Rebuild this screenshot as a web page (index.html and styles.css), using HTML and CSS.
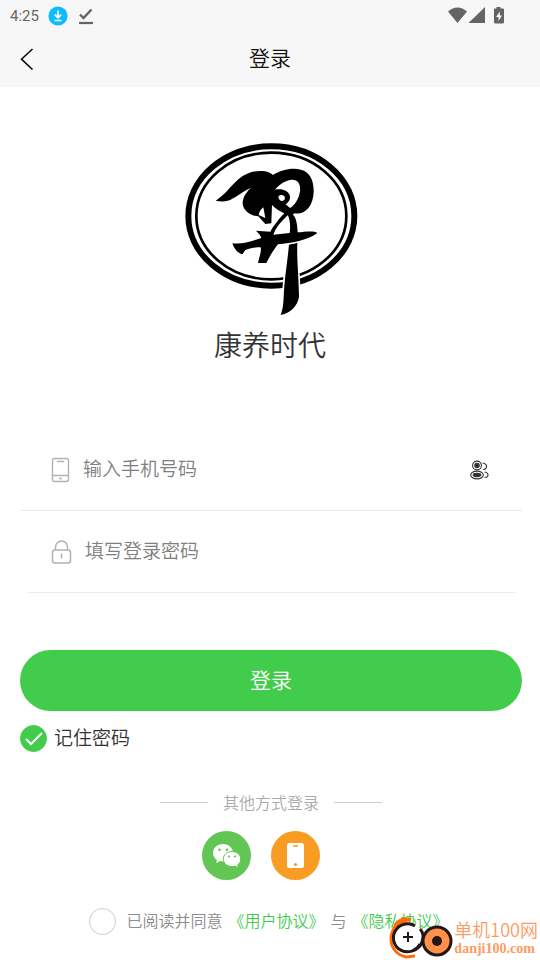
FILE: index.html
```html
<!DOCTYPE html>
<html lang="zh-CN">
<head>
  <meta charset="UTF-8">
  <meta name="viewport" content="width=device-width, initial-scale=1">
  <title>登录 - 康养时代</title>
  <link rel="stylesheet" href="styles.css">
</head>
<body>
  <header class="header">
    <div class="status-bar">
      <span class="time">4:25</span>
      <svg class="icon-download" width="20" height="20" viewBox="0 0 20 20">
        <circle cx="10" cy="10" r="9.6" fill="#0cbcff"/>
        <path d="M10 4.5v7M6.8 8.7l3.2 3.2 3.2-3.2M6.5 14.5h7" fill="none" stroke="#fff" stroke-width="1.7"/>
      </svg>
      <svg class="icon-done" width="16" height="18" viewBox="0 0 16 18">
        <path d="M2 7.500l3.500 3.500L13.500 2.500" fill="none" stroke="#646464" stroke-width="2.400"/>
        <path d="M1 16h14" stroke="#646464" stroke-width="2.200"/>
      </svg>
      <svg class="icon-signal" width="58" height="18" viewBox="0 0 58 18">
        <path d="M0 4.500Q9.500-3.500 19 4.500L9.500 16z" fill="#646464"/>
        <path d="M20.500 16L37 0v16z" fill="#646464"/>
        <path d="M48.500 0h4v1.500H55q1 0 1 1V15q0 1.500-1.500 1.500h-7Q46 16.500 46 15V2.500q0-1 1-1h1.500z" fill="#646464"/>
        <path d="M51.800 4.500L48 10h2.500v4L54 8.500h-2.200z" fill="#f7f7f7"/>
      </svg>
    </div>
    <div class="nav-bar">
      <button type="button" class="back-btn" aria-label="返回">
        <svg width="14" height="22" viewBox="0 0 14 22">
          <path d="M12.500 1L1.500 11.200 12.500 21.500" fill="none" stroke="#111" stroke-width="1.600"/>
        </svg>
      </button>
      <h1>登录</h1>
    </div>
  </header>

  <main class="container">
    <div class="brand">
      <svg class="logo" viewBox="0 0 570 570" role="img" aria-label="康养时代">
        <ellipse cx="289" cy="243" rx="249" ry="209" fill="none" stroke="#000" stroke-width="18"/>
        <ellipse cx="289" cy="243" rx="225" ry="190" fill="none" stroke="#000" stroke-width="8"/>
        <path d="M325 425L374 415 378 490 320 490z" fill="#fff"/>
        <!-- upper brush strokes -->
        <path fill-rule="evenodd" d="M122 197C150 180 166 154 190 133C216 110 246 106 270 109C283 111 290 117 294 120C318 105 350 97 378 104C405 111 417 137 416 170C415 211 391 241 358 235L350 242L331 236C313 229 301 220 291 210L289 265L271 267L250 244C226 243 205 226 203 207C202 188 214 171 228 158C200 170 178 192 158 197C144 201 132 199 122 197zM300 164C316 160 336 164 343 178C350 192 339 204 332 208L345 219C361 210 372 190 375 169C378 144 366 133 350 134C326 137 311 151 300 164zM310 187C312 198 324 202 329 193C332 185 325 179 318 180C313 181 310 183 310 187zM265 217C257 223 252 232 251 240L271 249z"/>
        <!-- lower brush strokes -->
        <path d="M331 232C318 245 298 268 286 290L243 287C253 297 257 302 259 309C230 318 202 329 172 325C178 342 188 354 202 358L211 345C229 338 244 337 257 337C260 350 252 367 249 384L274 384C284 363 297 343 309 328C350 324 396 317 427 294C418 286 390 290 368 292L366 270C364 254 359 241 349 235L338 239C345 253 347 272 344 294L295 299C302 277 324 253 343 237z"/>
        <path d="M342 328L367 323C365 374 371 420 372 485C369 510 349 533 317 540C327 514 325 489 328 453C332 407 339 365 342 328z"/>
        <path d="M340 328L368 322" stroke="#fff" stroke-width="3"/>
      </svg>
      <p class="brand-name">康养时代</p>
    </div>

    <form class="login-form">
      <div class="field">
        <label for="phone" aria-label="手机号码">
          <svg width="19" height="26" viewBox="0 0 19 26" fill="none" stroke="#b2b2b2" stroke-width="1.400">
            <rect x="1.500" y="1.500" width="16" height="23" rx="2"/>
            <path d="M1.500 18.500h16M6 4.500h7M8 21.500h3"/>
          </svg>
        </label>
        <input type="tel" id="phone" placeholder="输入手机号码">
        <button type="button" class="accounts-btn" aria-label="选择账号">
          <svg width="20" height="20" viewBox="0 0 20 20" fill="none" stroke="#333" stroke-width="1.100">
            <circle cx="7" cy="5.500" r="4.400"/>
            <circle cx="7" cy="5.500" r="2.200" fill="#333"/>
            <ellipse cx="7" cy="15" rx="6.300" ry="3.900"/>
            <ellipse cx="7" cy="15" rx="3.800" ry="1.600" fill="#333"/>
            <path d="M12.500 3q4 .5 4 3.500t-3.500 3M14.500 12q3.500.5 3.500 3t-3.500 2.500"/>
          </svg>
        </button>
      </div>
      <div class="field field-password">
        <label for="password" aria-label="登录密码">
          <svg width="21" height="24" viewBox="0 0 21 24" fill="none" stroke="#b2b2b2" stroke-width="1.500">
            <rect x="1.500" y="10" width="18" height="13" rx="2.500"/>
            <path d="M4.500 10V7a6 6 0 0 1 12 0v3M10.500 13.500v5"/>
          </svg>
        </label>
        <input type="password" id="password" placeholder="填写登录密码">
      </div>

      <button type="submit" class="login-btn">登录</button>

      <div class="remember">
        <input type="checkbox" id="remember" class="round-check" checked>
        <label for="remember">记住密码</label>
      </div>
    </form>

    <div class="other-title">其他方式登录</div>
    <div class="other-login">
      <button type="button" class="wechat-btn" aria-label="微信登录">
        <svg width="30" height="26" viewBox="0 0 30 26">
          <path d="M11 1C5 1 1 5 1 10c0 3 1.500 5.500 4 7l-1 3 4-2c1 .3 2 .4 3 .4 6 0 10-3.500 10-8.400S17 1 11 1z" fill="#fff"/>
          <path d="M20 8.500c-5 0-8.700 3.300-8.700 7.500S15 23.500 20 23.500c1 0 2-.2 3-.5l3.500 1.800-.8-3c2-1.300 3-3.400 3-5.800 0-4.200-3.700-7.500-8.700-7.500z" fill="#fff" stroke="#61c654" stroke-width="1"/>
          <g fill="#61c654">
            <circle cx="7.500" cy="6.800" r="1.300"/><circle cx="15" cy="6.800" r="1.300"/>
            <circle cx="17" cy="13.500" r="1.100"/><circle cx="23" cy="13.500" r="1.100"/>
          </g>
        </svg>
      </button>
      <button type="button" class="phone-btn" aria-label="手机登录">
        <svg width="17" height="26" viewBox="0 0 17 26">
          <rect width="17" height="25" rx="2.500" fill="#fff"/>
          <path d="M6 3h5" stroke="#f99c23" stroke-width="1.500"/>
          <circle cx="8.500" cy="21.500" r="1.600" fill="#f99c23"/>
        </svg>
      </button>
    </div>

    <div class="agreement">
      <input type="checkbox" id="agree" class="round-check">
      <label for="agree">已阅读并同意</label>
      <a href="#">《用户协议》</a>
      <span>与</span>
      <a href="#">《隐私协议》</a>
    </div>
  </main>

  <div class="watermark">
    <svg width="64" height="44" viewBox="0 0 64 44">
      <path d="M17 5C7 7 2 14 2 23s6 16 15 18l9-1" fill="none" stroke="#ff6b0a" stroke-width="3"/>
      <path d="M6 10Q12 1 22 4" fill="none" stroke="#ff6b0a" stroke-width="4"/>
      <path d="M26 10A14 14 0 1 0 31 28" fill="#fff" stroke="#231815" stroke-width="3"/>
      <path d="M31 13q5 5 2 13-2 6-8 8" fill="none" stroke="#231815" stroke-width="3"/>
      <circle cx="48" cy="25" r="14" fill="#ff914d" stroke="#231815" stroke-width="3"/>
      <circle cx="48" cy="25" r="5" fill="#231815"/>
      <path d="M14 21h10M19 16v10" stroke="#231815" stroke-width="2"/>
    </svg>
    <div class="watermark-text">
      <strong>单机100网</strong>
      <span>danji100.com</span>
    </div>
  </div>
</body>
</html>
```
FILE: styles.css
```css
/* Reset styles */
* {
  margin: 0;
  padding: 0;
  box-sizing: border-box;
}

body {
  font-family: 'Noto Sans CJK SC DemiLight', 'Noto Sans CJK SC', sans-serif;
  font-weight: 350;
  background: #fff;
  color: #333;
  min-height: 100vh;
}

button {
  border: none;
  background: none;
  font-family: inherit;
  font-weight: inherit;
  cursor: pointer;
}

svg {
  display: block;
}

a {
  color: #42cc4c;
  text-decoration: none;
}

/* Header */
.header {
  background: #f7f7f7;
}

.status-bar {
  display: flex;
  align-items: center;
  height: 31px;
  padding-left: 10px;
}

.time {
  font-family: Roboto, sans-serif;
  font-size: 15px;
  font-weight: 400;
  color: #646464;
  margin-right: 9px;
}

.icon-done {
  margin-left: 10px;
}

.icon-signal {
  margin-left: auto;
  margin-right: 34px;
}

.nav-bar {
  display: grid;
  grid-template-columns: 1fr auto 1fr;
  align-items: center;
  height: 56px;
  padding: 0 20px;
}

.nav-bar h1 {
  padding-bottom: 4px;
  font-size: 21px;
  font-weight: inherit;
  color: #111;
}

.back-btn {
  justify-self: start;
}

/* Main content */
.container {
  padding: 48px 18px 0 20px;
}

.brand {
  padding-right: 2px;
  text-align: center;
}

.logo {
  width: 190px;
  height: 190px;
  margin: 0 auto;
}

.brand-name {
  font-size: 28px;
  line-height: 38px;
}

/* Form */
.login-form {
  margin-top: 66px;
}

.field {
  display: flex;
  align-items: center;
  height: 82px;
  padding: 0 32px 0 31px;
  border-bottom: 1px solid #ebebeb;
}

.field-password {
  margin: 0 7px 0 8px;
  padding: 0 24px 0 23px;
}

.field input {
  flex: 1;
  min-width: 0;
  margin-left: 13px;
  padding-bottom: 3px;
  border: none;
  outline: none;
  background: none;
  font-family: inherit;
  font-size: 19px;
  font-weight: inherit;
  line-height: 28px;
  color: #333;
}

.field input::placeholder {
  color: #808080;
  opacity: 1;
}

.login-btn {
  display: block;
  width: 100%;
  height: 61px;
  margin-top: 57px;
  padding-bottom: 4px;
  border-radius: 31px;
  background: #42cc4c;
  color: #fff;
  font-size: 21px;
}

.round-check {
  appearance: none;
  flex: none;
  width: 27px;
  height: 27px;
  border: 1px solid #ccc;
  border-radius: 50%;
  background: #fff;
}

.round-check:checked {
  border-color: #42cc4c;
  background: #42cc4c url("data:image/svg+xml,%3Csvg xmlns='http://www.w3.org/2000/svg' viewBox='0 0 27 27'%3E%3Cpath d='M6 14l5 5L22 8' fill='none' stroke='white' stroke-width='2'/%3E%3C/svg%3E") center / 27px;
}

.remember {
  display: flex;
  align-items: center;
  gap: 7px;
  margin-top: 14px;
  font-size: 19px;
  line-height: 24px;
}

.remember label,
.agreement label,
.agreement a,
.agreement span {
  padding-bottom: 3px;
}

/* Other login ways */
.other-title {
  display: flex;
  justify-content: center;
  align-items: center;
  gap: 15px;
  margin-top: 38px;
  font-size: 16px;
  line-height: 24px;
  color: #aaa;
}

.other-title::before,
.other-title::after {
  content: "";
  width: 48px;
  height: 1px;
  background: #ccc;
}

.other-login {
  display: flex;
  justify-content: center;
  gap: 20px;
  margin-top: 17px;
  padding-right: 20px;
}

.other-login button {
  display: flex;
  align-items: center;
  justify-content: center;
  width: 49px;
  height: 49px;
  border-radius: 50%;
}

.wechat-btn {
  background: #61c654;
}

.phone-btn {
  background: #f99c23;
}

.agreement {
  display: flex;
  align-items: center;
  justify-content: center;
  margin-top: 28px;
  padding-right: 4px;
  font-size: 16px;
  line-height: 24px;
  color: #8c8c8c;
}

.agreement label {
  margin: 0 6px 0 10px;
}

.agreement span {
  margin: 0 6px;
}

/* Site mark over the bottom corner */
.watermark {
  position: absolute;
  right: 2px;
  bottom: 0;
  display: flex;
  align-items: center;
  gap: 1px;
  color: #ff9a62;
}

.watermark-text strong,
.watermark-text span {
  display: block;
  font-weight: inherit;
  font-size: 18px;
  line-height: 22px;
}

.watermark-text span {
  font-family: 'Liberation Serif', serif;
  font-size: 14px;
  font-weight: 700;
  line-height: 18px;
}
```
